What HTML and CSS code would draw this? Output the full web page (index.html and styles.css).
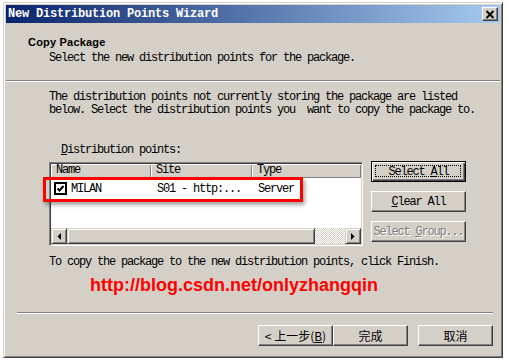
FILE: index.html
```html
<!DOCTYPE html>
<html lang="en">
<head>
  <meta charset="UTF-8" />
  <title>New Distribution Points Wizard</title>
  <link rel="stylesheet" href="styles.css">
</head>
<body>
  <div class="window">
    <div class="titlebar">
      <span class="title">New Distribution Points Wizard</span>
      <span class="close-btn">
        <svg width="10" height="9" viewBox="0 0 10 9">
          <path d="M1.5 1 L8.5 8 M8.5 1 L1.5 8" stroke="#000" stroke-width="2" fill="none" />
        </svg>
      </span>
    </div>

    <div class="header">
      <div class="header-title">Copy Package</div>
      <div class="header-sub">Select the new distribution points for the package.</div>
    </div>
    <div class="sep"></div>

    <div class="content">
      <p class="intro">The distribution points not currently storing the package are listed<br>below. Select the distribution points you&nbsp; want to copy the package to.</p>

      <div class="dp-label"><u>D</u>istribution points:</div>

      <div class="dp-row">
        <div class="list-wrap">
          <div class="listbox">
            <div class="list-head">
              <div class="col col-name">Name</div>
              <div class="col col-site">Site</div>
              <div class="col col-type">Type</div>
            </div>
            <div class="list-body">
              <div class="list-item">
                <div class="cell col-name">
                  <svg class="check" width="13" height="13" viewBox="0 0 13 13">
                    <rect x="1" y="1" width="11" height="11" fill="#fff" stroke="#000" stroke-width="2" />
                    <path d="M3.5 6.5 L5.5 8.5 L9.5 4" stroke="#000" stroke-width="2" fill="none" />
                  </svg>
                  <span>MILAN</span>
                </div>
                <div class="cell col-site">S01 - http:...</div>
                <div class="cell col-type">Server</div>
              </div>
            </div>
            <div class="hscroll">
              <div class="sb-btn">
                <svg width="4" height="7" viewBox="0 0 4 7"><polygon points="4,0 4,7 0.5,3.5" fill="#000" /></svg>
              </div>
              <div class="sb-thumb"></div>
              <div class="sb-track"></div>
              <div class="sb-btn">
                <svg width="4" height="7" viewBox="0 0 4 7"><polygon points="0,0 0,7 3.5,3.5" fill="#000" /></svg>
              </div>
            </div>
          </div>
          <div class="highlight"></div>
        </div>

        <div class="side-buttons">
          <div class="btn btn-default"><span>Select <u>A</u>ll</span></div>
          <div class="btn"><span><u>C</u>lear All</span></div>
          <div class="btn btn-disabled"><span>Select <u>G</u>roup...</span></div>
        </div>
      </div>

      <p class="finish-note">To copy the package to the new distribution points, click Finish.</p>
      <div class="watermark">http://blog.csdn.net/onlyzhangqin</div>
    </div>

    <div class="sep sep-bottom"></div>

    <div class="footer">
      <div class="btn btn-cjk"><span>&lt; 上一步(<u>B</u>)</span></div>
      <div class="btn btn-cjk"><span>完成</span></div>
      <div class="btn btn-cjk btn-cancel"><span>取消</span></div>
    </div>
  </div>
</body>
</html>
```

FILE: styles.css
```css
body {
  margin: 0;
  padding: 0;
  background-color: #fff;
  font-family: 'Liberation Mono', monospace;
  font-size: 12px;
  letter-spacing: -1.2px;
  color: #000;
}

.window {
  box-sizing: border-box;
  width: 500px;
  height: 356px;
  margin: 2px 0 0 3px;
  padding: 2px;
  background: #d4d0c8;
  border: 1px solid;
  border-color: #d4d0c8 #404040 #404040 #d4d0c8;
  box-shadow: inset 1px 1px #fff, inset -1px -1px #808080;
  display: flex;
  flex-direction: column;
}

/* title bar */
.titlebar {
  height: 18px;
  display: flex;
  align-items: center;
  justify-content: space-between;
  padding: 0 2px 0 2px;
  background: linear-gradient(to right, #0a246a, #a6caf0);
}

.title {
  color: #fff;
  font-weight: 700;
  letter-spacing: -0.2px;
}

.close-btn {
  box-sizing: border-box;
  width: 16px;
  height: 14px;
  display: flex;
  align-items: center;
  justify-content: center;
  background: #d4d0c8;
  border: 1px solid;
  border-color: #fff #404040 #404040 #fff;
  box-shadow: inset -1px -1px #808080;
}

/* header */
.header {
  height: 57px;
  box-sizing: border-box;
  padding: 12px 0 0 22px;
}

.header-title {
  font-family: 'Liberation Sans', Arial, sans-serif;
  font-weight: 700;
  font-size: 11px;
  letter-spacing: 0.2px;
  line-height: 14px;
}

.header-sub {
  margin: 3px 0 0 21px;
  line-height: 13px;
}

.sep {
  height: 1px;
  border-top: 1px solid #808080;
  background: #fff;
}

/* body */
.content {
  padding: 9px 0 0 43px;
}

.intro {
  margin: 0;
  line-height: 13px;
}

.dp-label {
  margin: 27px 0 0 12px;
  line-height: 13px;
}

.dp-row {
  display: flex;
  align-items: flex-start;
  gap: 8px;
  margin-top: 5px;
}

.list-wrap {
  position: relative;
}

.listbox {
  box-sizing: border-box;
  width: 314px;
  height: 84px;
  border: 1px solid;
  border-color: #808080 #fff #fff #808080;
  box-shadow: inset 1px 1px #404040, inset -1px -1px #d4d0c8;
  padding: 1px;
  background: #fff;
  display: flex;
  flex-direction: column;
}

.list-head {
  display: flex;
  height: 14px;
}

.col {
  box-sizing: border-box;
  height: 14px;
  line-height: 13px;
  padding-left: 5px;
  background: #d4d0c8;
  box-shadow: inset 1px 1px #fff, inset -1px -1px #808080;
}

.col-name { width: 100px; }
.col-site { width: 101px; }
.col-type { flex: 1; }

.list-body {
  flex: 1;
  padding-top: 2px;
}

.list-item {
  display: flex;
  height: 17px;
  align-items: center;
}

.cell {
  box-sizing: border-box;
  padding-left: 6px;
  display: flex;
  align-items: center;
}

.cell.col-name {
  padding-left: 3px;
}

.check {
  margin-right: 4px;
}

/* horizontal scrollbar */
.hscroll {
  display: flex;
  height: 16px;
}

.sb-btn,
.sb-thumb {
  box-sizing: border-box;
  height: 16px;
  background: #d4d0c8;
  border: 1px solid;
  border-color: #d4d0c8 #404040 #404040 #d4d0c8;
  box-shadow: inset 1px 1px #fff, inset -1px -1px #808080;
}

.sb-btn {
  width: 16px;
  display: flex;
  align-items: center;
  justify-content: center;
}

.sb-thumb {
  width: 248px;
}

.sb-track {
  flex: 1;
  background: repeating-conic-gradient(#fff 0 25%, #d4d0c8 0 50%) 0 0 / 2px 2px;
}

.highlight {
  position: absolute;
  left: -6px;
  top: 15px;
  width: 260px;
  height: 25px;
  box-sizing: border-box;
  border: 3px solid #f00;
  box-shadow: 2px 3px 4px rgba(0, 0, 0, 0.35);
}

/* buttons */
.side-buttons {
  display: flex;
  flex-direction: column;
  gap: 9px;
  margin-top: -1px;
}

.btn {
  position: relative;
  box-sizing: border-box;
  width: 95px;
  height: 21px;
  display: flex;
  align-items: center;
  justify-content: center;
  white-space: pre;
  background: #d4d0c8;
  border: 1px solid;
  border-color: #fff #404040 #404040 #fff;
  box-shadow: inset -1px -1px #808080;
}

.btn-default {
  border: 1px solid #000;
  box-shadow: inset 1px 1px #fff, inset -1px -1px #404040, inset -2px -2px #808080;
}

.btn-default::after {
  content: '';
  position: absolute;
  inset: 3px 4px 4px 3px;
  border: 1px dotted #000;
}

.btn-disabled {
  color: #808080;
  text-shadow: 1px 1px #fff;
}

.finish-note {
  margin: 10px 0 0;
  line-height: 13px;
}

.watermark {
  margin: 6px 0 0 41px;
  line-height: 20px;
  font-family: 'Liberation Sans', Arial, sans-serif;
  font-weight: 700;
  font-size: 18px;
  letter-spacing: 0;
  color: #f00;
}

.sep-bottom {
  margin: 17px 7px 0 11px;
}

/* footer */
.footer {
  display: flex;
  justify-content: flex-end;
  padding: 11px 7px 0 0;
}

.btn-cjk {
  width: 75px;
  font-family: 'Noto Sans CJK SC', sans-serif;
  font-size: 12px;
  letter-spacing: 0;
}

.btn-cancel {
  margin-left: 10px;
}
```
